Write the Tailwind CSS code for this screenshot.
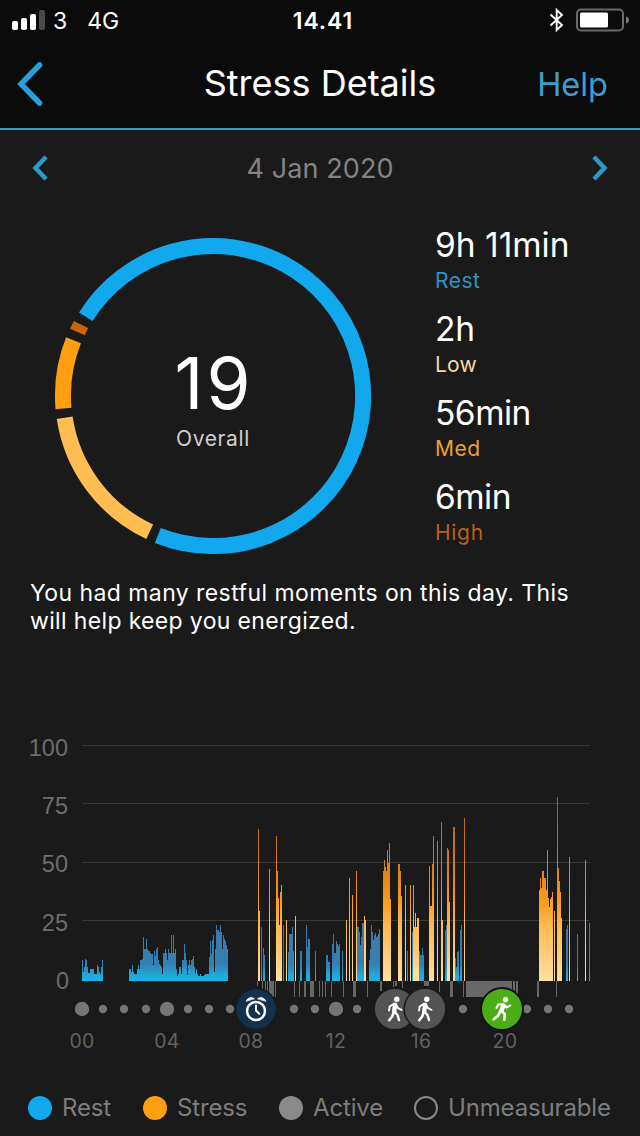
<!DOCTYPE html>
<html lang="en">

<head>
    <meta charset="UTF-8" />
    <meta name="viewport" content="width=device-width, initial-scale=1.0" />
    <title>Stress Details</title>
    <script src="https://cdn.jsdelivr.net/npm/@tailwindcss/browser@4"></script>
</head>

<body class="bg-[#1a1a1a] text-white font-[Inter,'Liberation_Sans',sans-serif]">
    <div class="w-[640px] h-[1136px] flex flex-col overflow-hidden">

        <!-- Status bar + title -->
        <header class="bg-[#0b0b0b] border-b-2 border-[#3a9ac6] h-[130px] shrink-0">
            <div class="h-10 grid grid-cols-3 items-center pl-3 pr-[11px] text-[23px]">
                <div class="flex items-center">
                    <svg class="w-[34px] h-5" viewBox="0 0 34 20">
                        <rect x="0" y="11" width="6" height="9" rx="1.8" fill="#fff" />
                        <rect x="9" y="8" width="6" height="12" rx="1.8" fill="#fff" />
                        <rect x="18" y="4" width="6" height="16" rx="1.8" fill="#fff" />
                        <rect x="27" y="0" width="6" height="20" rx="1.8" fill="#4a4a4a" />
                    </svg>
                    <span class="ml-[7px] pt-0.5">3</span>
                    <span class="ml-5 pt-0.5">4G</span>
                </div>
                <div class="text-center font-semibold tracking-[0.9px] pl-[5px] pt-0.5">14.41</div>
                <div class="flex items-center justify-end gap-3">
                    <svg class="w-4 h-6" viewBox="0 0 16 24" fill="none" stroke="#fff" stroke-width="1.9">
                        <path d="M2.500 6.500L14 17L8.700 22V2L14 7L2.500 17.500" />
                    </svg>
                    <svg class="w-[53px] h-6" viewBox="0 0 53 24">
                        <rect x="1" y="1.500" width="46" height="21" rx="4" fill="none" stroke="#6b6b6b" stroke-width="2" />
                        <rect x="4" y="4.500" width="28" height="15" rx="1.500" fill="#fff" />
                        <path d="M50 8.500Q53 9.500 53 12T50 15.500Z" fill="#7a7a7a" />
                    </svg>
                </div>
            </div>
            <div class="h-[88px] grid grid-cols-[140px_1fr_140px] items-center">
                <svg class="ml-4 w-7 h-11" viewBox="0 0 28 44" fill="none" stroke="#28a0dc" stroke-width="5.500"
                    stroke-linecap="round">
                    <path d="M23.500 3L5 22L23.500 41" />
                </svg>
                <h1 class="text-center text-[36px] leading-10 pb-[3px] whitespace-nowrap">Stress Details</h1>
                <a href="#" class="text-[32.500px] leading-10 text-[#3b9ed0] text-right pt-px pr-8">Help</a>
            </div>
        </header>

        <!-- Date switcher -->
        <div class="h-[76px] shrink-0 flex items-center justify-between px-8">
            <svg class="w-4 h-[26px]" viewBox="0 0 16 26" fill="none" stroke="#2e9bd0" stroke-width="4.500">
                <path d="M14 2L3.500 13L14 24" />
            </svg>
            <span class="text-[27px] text-[#848484] tracking-[0.1px] pt-0.5">4 Jan 2020</span>
            <svg class="w-4 h-[26px]" viewBox="0 0 16 26" fill="none" stroke="#2e9bd0" stroke-width="4.500">
                <path d="M2 2L12.500 13L2 24" />
            </svg>
        </div>

        <!-- Score ring and durations -->
        <section class="h-[368px] shrink-0 flex pl-[53px] pt-[20px]">
            <div class="grid w-80 h-[340px] place-items-center">
                <svg class="col-start-1 row-start-1 w-80 h-80" viewBox="-160 -160 320 320" fill="none" stroke-width="16">
                    <path d="M-127.200 -79.200A150 150 0 1 1 -55.200 139.500" stroke="#12a8ee" />
                    <path d="M-63.300 135.700A150 150 0 0 1 -148.300 21.800" stroke="#ffbd52" />
                    <path d="M-149.500 12.500A150 150 0 0 1 -139.500 -55.700" stroke="#ff9f10" />
                    <path d="M-135.500 -64A150 150 0 0 1 -132 -71.500" stroke="#c9650c" />
                </svg>
                <div class="col-start-1 row-start-1 text-center pt-[7px]">
                    <div class="text-[71px] leading-[72px] tracking-[3px] pl-0.5 pt-px -mb-px">19</div>
                    <div class="text-[21px] leading-7 mt-[7px] text-[#cfcfcf] tracking-[0.6px]">Overall</div>
                </div>
            </div>
            <dl class="ml-[62px] w-[180px] -mt-px space-y-1">
                <div class="h-20">
                    <dt class="text-[33.500px] leading-[40px]">9h 11min</dt>
                    <dd class="text-[21px] leading-8 tracking-[0.5px] text-[#3193c4]">Rest</dd>
                </div>
                <div class="h-20">
                    <dt class="text-[33.500px] leading-[40px] tracking-[-0.3px]">2h</dt>
                    <dd class="text-[21px] leading-8 tracking-[0.2px] text-[#f5d9a4]">Low</dd>
                </div>
                <div class="h-20">
                    <dt class="text-[33.500px] leading-[40px] tracking-[-0.5px]">56min</dt>
                    <dd class="text-[21px] leading-8 tracking-[0.5px] text-[#eda02f]">Med</dd>
                </div>
                <div class="h-20">
                    <dt class="text-[33.500px] leading-[40px] tracking-[-0.5px]">6min</dt>
                    <dd class="text-[21px] leading-8 tracking-[0.7px] text-[#b9621e]">High</dd>
                </div>
            </dl>
        </section>

        <p class="h-[156px] shrink-0 pl-[30px] pt-[5px] text-[23px] leading-7 tracking-[0.430px]">
            You had many restful moments on this day. This<br />
            <span class="tracking-[0.350px]">will help keep you energized.</span>
        </p>

        <!-- Stress timeline -->
        <svg class="w-[640px] h-[330px] shrink-0" viewBox="0 730 640 330">
            <defs>
                <linearGradient id="rest" gradientUnits="userSpaceOnUse" x1="0" y1="981" x2="0" y2="921">
                    <stop offset="0" stop-color="#18b6e6" />
                    <stop offset="0.1" stop-color="#22a8d8" />
                    <stop offset="0.28" stop-color="#347fb2" />
                    <stop offset="1" stop-color="#3f79a8" />
                </linearGradient>
                <linearGradient id="stress" gradientUnits="userSpaceOnUse" x1="0" y1="981" x2="0" y2="797">
                    <stop offset="0" stop-color="#ffe0a4" />
                    <stop offset="0.3" stop-color="#ffb950" />
                    <stop offset="0.44" stop-color="#fb9a18" />
                    <stop offset="0.64" stop-color="#d97b16" />
                    <stop offset="1" stop-color="#a85a20" />
                </linearGradient>
            </defs>
            <g stroke="#383838">
                <path d="M82 745.500H590M82 803.500H590M82 862.500H590M82 920.500H590" />
            </g>
            <g fill="#6d6d6d" font-size="23.500" font-family="Liberation Sans, sans-serif" text-anchor="end">
                <text x="68" y="756">100</text>
                <text x="68" y="814">75</text>
                <text x="68" y="872">50</text>
                <text x="68" y="931">25</text>
                <text x="69" y="989">0</text>
            </g>
            <g id="bars" shape-rendering="crispEdges"></g>
            <g id="dots" fill="#757575"></g>
            <g fill="#626262" font-size="19.500" letter-spacing="0.3" text-anchor="middle">
                <text x="82" y="1048">00</text>
                <text x="167" y="1048">04</text>
                <text x="251" y="1048">08</text>
                <text x="336" y="1048">12</text>
                <text x="421" y="1048">16</text>
                <text x="505" y="1048">20</text>
            </g>

            <!-- Event badges -->
            <g stroke="#1a1a1a" stroke-width="1.500">
                <circle cx="256" cy="1009" r="20.500" fill="#12314d" />
                <circle cx="395" cy="1009" r="20.800" fill="#535353" />
            </g>
            <g transform="translate(256 1009)" fill="none" stroke="#fff" stroke-linecap="round">
                <circle cx="0" cy="1.900" r="9" stroke-width="2.500" />
                <path d="M0 -3.500V1.500L3.300 4.700" stroke-width="2" />
                <path d="M-9.800 -8A5.300 5.300 0 0 1 -1.800 -10.500ZM9.800 -8A5.300 5.300 0 0 0 1.800 -10.500Z" fill="#fff" stroke-width="0.800"
                    stroke-linejoin="round" />
            </g>
            <g id="walker" fill="none" stroke="#fff" stroke-linecap="round" stroke-linejoin="round"
                transform="translate(395 1009)">
                <circle cx="1.800" cy="-9.800" r="2.700" fill="#fff" stroke="none" />
                <path d="M0 -4.300L-0.800 2.500" stroke-width="4.300" />
                <path d="M-1 -5.300L-5.300 -2.500L-6 1.500M1 -4.500L3 -0.800L6.500 0.800" stroke-width="1.900" />
                <path d="M-0.300 3L2.500 6L4 11M-1.500 3.500L-2.800 7.500L-5.800 11.300" stroke-width="2.500" />
            </g>
            <circle cx="425" cy="1009" r="20.800" fill="#535353" stroke="#1a1a1a" stroke-width="1.500" />
            <use href="#walker" x="30" />
            <circle cx="502" cy="1009" r="21" fill="#4bae17" stroke="#141414" stroke-width="2" />
            <g transform="translate(502 1009)" fill="none" stroke="#fff" stroke-linecap="round" stroke-linejoin="round">
                <circle cx="3.500" cy="-9.300" r="2.700" fill="#fff" stroke="none" />
                <path d="M1.300 -3.500L-0.500 1.500" stroke-width="4.500" />
                <path d="M0.500 -4.800L-3.800 -4.500L-5.500 -1M2.300 -4L4.500 -1.500L8.300 -3.600" stroke-width="2.100" />
                <path d="M-0.300 2L2.800 5.200L2.300 10.800M-2 2.500L-3.800 6.500L-8.300 10.300" stroke-width="2.600" />
            </g>
        </svg>

        <!-- Legend -->
        <footer class="flex items-center h-[76px] shrink-0 pl-7 pt-5 text-[24px] leading-8 text-[#7d7d7d] tracking-[-0.150px] whitespace-nowrap">
            <div class="flex items-center gap-[10px] w-[115px]">
                <span class="size-6 rounded-full bg-[#12a8ee]"></span>Rest
            </div>
            <div class="flex items-center gap-[10px] w-[136px]">
                <span class="size-6 rounded-full bg-[#ff9f10]"></span>Stress
            </div>
            <div class="flex items-center gap-[10px] w-[135px]">
                <span class="size-6 rounded-full bg-[#8a8a8a]"></span>Active
            </div>
            <div class="flex items-center gap-[10px]">
                <span class="size-6 rounded-full border-2 border-[#8a8a8a]"></span>Unmeasurable
            </div>
        </footer>
    </div>

    <script>
        const BASE = 981;

        // start x -> bar heights, one per pixel column
        const rest = {
            82: [21, 9, 14, 22, 21, 14, 8, 8, 12, 12, 12, 12, 7, 7, 7, 16, 14, 9, 7, 14, 21],
            129: [12, 12, 9, 16, 9, 7, 7, 7, 12, 16, 12, 21, 21, 22, 44, 32, 32, 42, 32, 30, 30, 28, 27, 27, 16,
                30, 25, 32, 34, 21, 17, 16, 14, 7, 28, 28, 32, 28, 21, 32, 28, 28, 46, 28, 46, 28, 32, 12, 5, 7,
                14, 14, 7, 21, 21, 37, 28, 21, 6, 16, 21, 16, 21, 22, 25, 14, 8, 12, 7, 5, 5, 7, 5, 5, 5, 6, 7,
                7, 7, 7, 24, 40, 27, 41, 46, 9, 32, 56, 51, 51, 49, 56, 49, 32, 46, 42, 40, 36, 32],
            261: [54], 263: [33, 26], 283: [56], 288: [29, 47, 47, 47, 54, 30], 300: [30, 30],
            306: [56, 34, 42, 42], 315: [30], 326: [26, 26, 19, 19],
            332: [37, 47, 28, 28, 40, 37, 35, 37], 342: [30],
            357: [54, 54, 49, 36, 44, 58, 58], 369: [21, 32, 56, 49, 41, 46, 48, 44, 45, 47, 52],
            407: [30], 412: [49], 419: [30, 26, 26, 33, 26], 445: [51, 56], 455: [23, 14, 29, 30],
            460: [51, 56], 566: [52, 56], 577: [47], 589: [58]
        };
        const stress = {
            258: [152, 70], 269: [112], 276: [145, 110, 83, 56, 89, 96], 286: [61], 295: [65], 346: [61],
            349: [103], 352: [86], 356: [110], 364: [65, 61],
            383: [110, 121, 114, 110, 131, 118, 138, 82], 398: [117, 117, 110, 85], 405: [96], 410: [96],
            413: [96, 54, 68, 54, 63, 63], 429: [115, 75, 75, 117, 145], 437: [140], 441: [159, 61],
            447: [133, 131, 79], 453: [154, 154], 464: [163],
            539: [91, 103, 93, 110, 110, 103, 103, 91, 131, 83, 74, 82, 84, 89], 554: [70],
            557: [184, 113, 100, 89, 63], 569: [124], 585: [121]
        };
        // x, width, height below the baseline
        const active = [
            [257, 1, 5], [262, 1, 9], [265, 1, 10], [267, 1, 12], [269, 5, 16], [275, 1, 16], [294, 1, 16],
            [299, 1, 16], [304, 2, 16], [310, 4, 16], [319, 1, 16], [322, 1, 16], [325, 1, 16], [331, 1, 16],
            [343, 1, 16], [353, 3, 16], [367, 1, 16], [380, 2, 10], [393, 1, 6], [395, 2, 5], [402, 1, 7],
            [424, 5, 5], [439, 1, 11], [450, 3, 16], [463, 1, 16], [466, 46, 16], [513, 2, 16], [516, 2, 16],
            [537, 2, 16], [556, 1, 16]
        ];

        function rects(series, fill) {
            return Object.entries(series).map(([start, heights]) => heights.map((h, i) =>
                `<rect x="${+start + i}" y="${BASE - h}" width="1" height="${h}" fill="${fill}"/>`
            ).join("")).join("");
        }

        document.getElementById("bars").innerHTML =
            rects(rest, "url(#rest)") + rects(stress, "url(#stress)") +
            active.map(([x, w, h]) => `<rect x="${x}" y="${BASE}" width="${w}" height="${h}" fill="#686868"/>`).join("");

        const big = [82, 167, 336];
        const small = [103, 124, 146, 188, 209, 230, 294, 315, 357, 463, 527, 548, 569];
        document.getElementById("dots").innerHTML =
            big.map(x => `<circle cx="${x}" cy="1009" r="7.2"/>`).join("") +
            small.map(x => `<circle cx="${x}" cy="1009" r="4.2"/>`).join("");
    </script>
</body>

</html>
